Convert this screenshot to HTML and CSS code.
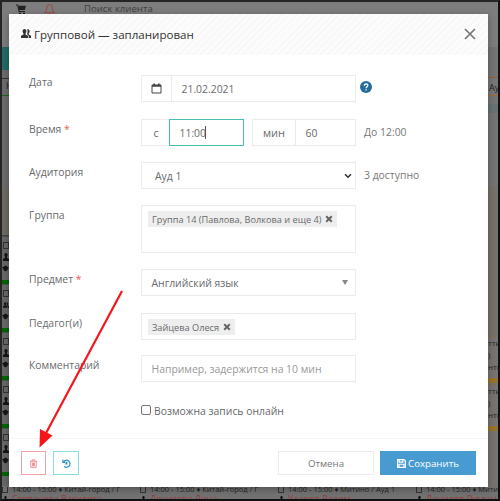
FILE: index.html
```html
<!DOCTYPE html>
<html lang="ru">
<head>
<meta charset="utf-8">
<title>Групповой — запланирован</title>
<link rel="stylesheet" href="styles.css">
</head>
<body>
<svg class="sprite" aria-hidden="true">
  <symbol id="person" viewBox="0 0 6 8"><path d="M3 0a1.7 1.9 0 0 1 1 3.4v1.4l2 1.2v2H0V6l2-1.2V3.4A1.7 1.9 0 0 1 3 0z"/></symbol>
  <symbol id="hat" viewBox="0 0 8 7"><path d="M4 0l4 2.6L6.5 3.6V5L4 7 1.5 5V3.6L0 2.6z"/></symbol>
  <symbol id="people" viewBox="0 0 20 18"><path d="M7 0c2.400 0 3.800 2 3.800 4.500 0 2-.8 3.600-1.800 4.500v2c2.500 1 5 2 5 4v3H0v-3c0-2 2.500-3 5-4V9C4 8.100 3.200 6.500 3.200 4.500 3.200 2 4.600 0 7 0z"/><path d="M12.200.6c2.800-1.200 5.100.9 5.100 3.900 0 2-.8 3.600-1.800 4.500v2c2.300 1 4.500 2 4.500 4v3h-4.600v-3c0-2.300-1.600-3.700-3.400-4.700C13.200 8 13.700 3.500 12.200.6z"/></symbol>
</svg>
<div class="screen">
  <div class="topbar">
    <svg class="cart" viewBox="0 0 10 11"><path d="M0 .5h2l.3 1.200H10L8.800 6H3.300l.2 1H9v1H2.600L1.300 1.500H0z"/><circle cx="4" cy="9.500" r="1.100"/><circle cx="8" cy="9.500" r="1.100"/></svg>
    <svg class="bell" viewBox="0 0 12 13"><path d="M1 10C3 8.500 2.500 6 3 4c.5-2 1.500-2.700 3-2.700S8.500 2 9 4c.5 2 0 4.500 2 6zM5 11.500h2"/></svg>
    <span class="search">Поиск клиента</span>
  </div>
  <div class="middle">
    <div class="rail left">
      <div class="teal"></div>
      <div class="headcell">Н</div>
      <div class="blank"></div>
      <div class="sand"></div>
      <div class="lesson"><i></i><svg><use href="#person"/></svg><svg><use href="#hat"/></svg><b></b></div>
      <div class="lesson"><i></i><svg><use href="#people"/></svg><svg><use href="#hat"/></svg><b></b></div>
      <div class="lesson"><i></i><svg><use href="#person"/></svg><svg><use href="#hat"/></svg><b></b></div>
      <div class="lesson"><i></i><svg><use href="#person"/></svg><svg><use href="#hat"/></svg><b></b></div>
      <div class="lesson"><i></i><svg><use href="#person"/></svg><svg><use href="#hat"/></svg><b></b></div>
    </div>
    <div class="rail right">
      <div class="gap"></div>
      <div class="headcell">Ау</div>
      <div class="blank"></div>
      <div class="event"><span>тти</span><span>)</span><span>нти</span><b></b></div>
      <div class="event"><span>тти</span><span>)</span><span>нти</span><b></b></div>
    </div>
  </div>
  <div class="bottom">
    <div class="slot"><div><i></i>14:00 - 15:00 ♦ Китай-город / Г</div><div class="name"><svg><use href="#person"/></svg>Степанова Василиса</div></div>
    <div class="slot"><div><i></i>14:00 - 15:00 ♦ Китай-город / Г</div><div class="name"><svg><use href="#person"/></svg>Денисова Дина</div></div>
    <div class="slot"><div><i></i>14:00 - 15:00 ♦ Митино / Ауд 1</div><div class="name"><svg><use href="#person"/></svg>Ударов Вадим</div></div>
    <div class="slot"><div><i></i>14:00 - 15:00 ♦ Мити</div><div class="name"><svg><use href="#person"/></svg>Данилов Руслан</div></div>
  </div>
</div>

<div class="modal">
  <header class="head">
    <svg class="people"><use href="#people"/></svg>
    <h1>Групповой — запланирован</h1>
    <svg class="close" viewBox="0 0 12 12"><path d="M1 1l10 10M11 1L1 11"/></svg>
  </header>
  <div class="form">
    <div class="row date">
      <label>Дата</label>
      <div class="control group">
        <span class="addon cal"><svg viewBox="0 0 11 11"><path d="M1 2h9v8H1z"/><path class="bar" d="M1 2.800h9M3.200.6v2M7.800.6v2"/></svg></span>
        <span class="value">21.02.2021</span>
      </div>
      <svg class="help" viewBox="0 0 12 12"><circle cx="6" cy="6" r="6"/><path d="M4.200 4.700C4.300 2.400 8 2.500 7.800 4.500 7.700 5.700 6.100 5.700 6.100 7.200M6.100 8.200v1.200"/></svg>
    </div>
    <div class="row time">
      <label>Время <em>*</em></label>
      <div class="pair">
        <div class="control group from"><span class="addon">с</span><span class="value focus">11:00<i class="caret"></i></span></div>
        <div class="control group mins"><span class="addon">мин</span><span class="value">60</span></div>
      </div>
      <span class="note">До 12:00</span>
    </div>
    <div class="row room">
      <label>Аудитория</label>
      <div class="control select"><span>Ауд 1</span><svg class="chev" viewBox="0 0 8 6"><path d="M1 1.200l3 3 3-3"/></svg></div>
      <span class="note avail">3 доступно</span>
    </div>
    <div class="row team">
      <label>Группа</label>
      <div class="control tags"><span class="tag"><span>Группа 14 (Павлова, Волкова и еще 4)</span><svg viewBox="0 0 8 8"><path d="M1.200 1.200l5.600 5.600M6.800 1.200L1.200 6.800"/></svg></span></div>
    </div>
    <div class="row subject">
      <label>Предмет <em>*</em></label>
      <div class="control combo"><span>Английский язык</span><svg class="tri" viewBox="0 0 6 5"><path d="M0 0h6L3 5z"/></svg></div>
    </div>
    <div class="row teacher">
      <label>Педагог(и)</label>
      <div class="control tags"><span class="tag"><span>Зайцева Олеся</span><svg viewBox="0 0 8 8"><path d="M1.200 1.200l5.600 5.600M6.800 1.200L1.200 6.800"/></svg></span></div>
    </div>
    <div class="row comment">
      <label>Комментарий</label>
      <div class="control combo hint"><span>Например, задержится на 10 мин</span></div>
    </div>
    <div class="online"><span class="box"></span><span>Возможна запись онлайн</span></div>
  </div>
  <footer class="foot">
    <span class="btn trash"><svg viewBox="0 0 10 10"><path d="M1 2.500h8M3.500 2.300V1h3v1.300M2 2.500V9.300h6V2.500M4 4v4M5 4v4M6 4v4"/></svg></span>
    <span class="btn history"><svg viewBox="0 0 10 10"><path d="M1.800 3A3.900 3.900 0 1 1 2.500 8.300"/><path d="M1 .9v2.900h3M5.300 3v2.400H3.500"/></svg></span>
    <span class="btn cancel">Отмена</span>
    <span class="btn save"><svg viewBox="0 0 10 10"><path d="M.7.7h7l1.600 1.600v7H.7zM2.500.8v2.700h4V.8M2.300 9V5.800h5.400V9"/></svg><span>Сохранить</span></span>
  </footer>
</div>

<svg class="arrow" viewBox="0 0 90 170"><path class="shaft" d="M86 6L9 150"/><path class="tip" d="M3.500 162.500L4 144l12.500 6.500z"/></svg>
</body>
</html>
```
FILE: styles.css
```css
* { box-sizing: border-box; }
body {
  margin: 0;
  width: 500px;
  height: 501px;
  overflow: hidden;
  position: relative;
  font-family: "Open Sans", "Noto Sans", sans-serif;
  font-size: 10.400px;
  color: #676a6c;
}
svg { display: block; flex: none; }
.sprite { position: absolute; width: 0; height: 0; }

/* dimmed schedule behind the dialog */
.screen {
  width: 500px;
  height: 501px;
  display: flex;
  flex-direction: column;
  overflow: hidden;
  border: 2px solid #252525;
  border-right-color: #111;
  border-bottom-color: #111;
  background: #6e6e6e;
}
.topbar {
  height: 45px;
  flex: none;
  display: flex;
  align-items: flex-start;
  background: #7d7d7d;
  color: #3f3f3f;
  white-space: nowrap;
}
.cart { width: 10px; height: 11px; margin: 2px 0 0 14px; fill: #222; }
.bell { width: 11px; height: 13px; margin: 1px 0 0 18px; fill: none; stroke: #a04b49; stroke-width: 1.2; }
.search { margin-left: 29px; line-height: 14px; font-size: 9.600px; }
.middle { flex: none; height: 439px; display: flex; justify-content: space-between; }
.rail { display: flex; flex-direction: column; overflow: hidden; }
.left { width: 7px; background: #686868; }
.teal { height: 23px; background: #206b67; flex: none; }
.headcell {
  height: 26px;
  flex: none;
  padding-top: 8px;
  font-size: 9px;
  line-height: 16px;
  color: #222;
  border-bottom: 1px solid #116b16;
}
.left .headcell { background: linear-gradient(#6c6c6c 8px, #333 8px 9px, #6c6c6c 9px); padding-left: 4px; }
.left .blank { height: 92px; flex: none; background: #6c6c6c; }
.sand { height: 48px; flex: none; background: #6f6b62; border-bottom: 1px solid #444; }
.lesson { height: 48px; flex: none; display: flex; flex-direction: column; align-items: center; border-top: 1px solid #555; padding-top: 5px; }
.lesson i, .slot i { width: 6px; height: 7px; flex: none; border: 1px solid #333; }
.lesson svg { width: 6px; height: 8px; margin-top: 4px; fill: #151515; }
.lesson svg + svg { width: 7px; height: 7px; }
.lesson b { width: 7px; height: 4px; margin-top: 8px; background: #006400; }
.right { width: 10px; background: #767370; font-size: 8px; color: #292929; }
.gap { height: 31px; flex: none; background: #747474; border-bottom: 1px solid #926039; }
.right .headcell { height: 18px; padding: 2px 0 0 1px; border-bottom-color: #a06b36; background: #777; }
.right .blank { height: 240px; flex: none; background: linear-gradient(#757575 8px, #687272 8px 17px, #747474 17px 90px, #77716b 90px); }
.event { height: 48px; flex: none; display: flex; flex-direction: column; line-height: 12px; white-space: nowrap; border-top: 1px dotted #896d46; }
.event b { margin-top: 5px; height: 5px; flex: none; background: #9a732b; }
.bottom { flex: 1; padding-top: 1px; display: flex; overflow: hidden; white-space: nowrap; font-size: 7.500px; line-height: 7px; color: #252525; background: #727272; }
.slot { width: 138px; flex: none; overflow: hidden; }
.slot div { display: flex; align-items: center; height: 5px; gap: 4px; }
.slot .name { font-size: 9px; line-height: 9px; height: 9px; margin-top: 2px; padding-left: 1px; color: #983c38; }
.slot svg { width: 5px; height: 6px; fill: #111; }

.modal {
  position: absolute;
  left: 9px;
  top: 14px;
  width: 479px;
  height: 473px;
  display: flex;
  flex-direction: column;
  background: #fff;
  box-shadow: 0 2px 7px rgba(0, 0, 0, .3);
}
.head {
  height: 41px;
  flex: none;
  display: flex;
  align-items: center;
  padding: 0 12px;
  background: repeating-linear-gradient(135deg, #fcfcfc 0 3px, #f8f8f8 3px 5px);
}
.people { width: 10px; height: 9px; fill: #333; margin-top: -2px; }
h1 { margin: -1px 0 0 3px; font-size: 11.550px; font-weight: 500; color: #333; white-space: nowrap; }
.close { width: 12px; height: 12px; margin: -2px 0 0 auto; fill: none; stroke: #777; stroke-width: 1.7; }

.form { flex: 1; padding: 20px 0 0 20px; }
.row { display: flex; align-items: flex-start; height: 27px; margin-bottom: 17px; white-space: nowrap; }
.row.time, .row.room, .row.team { margin-bottom: 16px; }
.row.team { height: 48px; }
.row.teacher { margin-bottom: 15px; }
label { width: 112px; flex: none; line-height: 15px; margin-top: 3px; }
.date label { margin-top: 0; }
label em { color: #f25555; font-style: normal; }
.control { width: 215px; height: 27px; flex: none; border: 1px solid #ebebeb; }
.group { display: flex; }
.addon { width: 30px; display: flex; align-items: center; justify-content: center; border-right: 1px solid #ebebeb; }
.cal svg { width: 11px; height: 11px; fill: none; stroke: #444; stroke-width: 1; }
.cal .bar { stroke-width: 1.7; }
.value { flex: 1; display: flex; align-items: center; padding-left: 9.500px; }
.help { width: 12px; height: 12px; margin: 6px 0 0 4px; fill: #246d9b; }
.help path { fill: none; stroke: #fff; stroke-width: 1.3; }
.pair { width: 215px; display: flex; justify-content: space-between; }
.from { width: 103px; }
.from .addon { width: 28px; border: 0; }
.value.focus { margin: -1px; border: 1px solid #45bcb4; }
.caret { width: 1px; height: 13px; background: #555; margin-left: -1px; }
.mins { width: 104px; }
.mins .addon { width: 43px; font-size: 11px; }
.note { margin: 6px 0 0 8px; line-height: 15px; color: #777; }
.select { display: flex; align-items: center; justify-content: space-between; padding: 0 3px 0 13px; }
.chev { width: 8px; height: 6px; fill: none; stroke: #333; stroke-width: 1.6; }
.team .control { height: 48px; }
.tags { padding: 5px 0 0 6px; }
.tag { display: inline-flex; align-items: center; height: 16px; padding: 0 4px; gap: 4px; background: #eee; font-size: 9.200px; vertical-align: top; }
.tag svg { width: 8px; height: 8px; stroke: #666; stroke-width: 2; }
.combo { display: flex; align-items: center; justify-content: space-between; padding: 0 7px 0 9.500px; }
.tri { width: 6px; height: 5px; fill: #888; }
.hint { color: #999; }
.online { display: flex; align-items: center; gap: 3px; margin: 21px 0 0 112px; height: 15px; white-space: nowrap; }
.box { width: 10px; height: 10px; border: 1px solid #777; border-radius: 2px; margin-top: -2px; }

.foot { height: 49px; flex: none; display: flex; align-items: center; padding: 0 12px; border-top: 1px solid #f4f4f4; }
.btn { height: 24px; display: flex; align-items: center; justify-content: center; border: 1px solid #ebebeb; }
.trash { width: 25px; border-color: #f4a3a7; }
.btn svg { width: 9px; height: 9px; fill: none; }
.trash svg { stroke: #ef8589; stroke-width: 1; }
.history { width: 26px; margin-left: 7px; border-color: #85dce2; }
.history svg { stroke: #2d8fcc; stroke-width: 1.400; }
.cancel { width: 96px; margin-left: auto; font-size: 9.700px; color: #777; }
.save { width: 96px; margin-left: 6px; gap: 2px; border: 0; background: #479bd1; color: #fff; font-size: 9.700px; font-weight: 500; }
.save svg { stroke: #fff; stroke-width: 1.300; }

.arrow { position: absolute; left: 36px; top: 285px; width: 90px; height: 170px; }
.shaft { stroke: #f5161c; stroke-width: 2.200; fill: none; }
.tip { fill: #f5161c; }
```
